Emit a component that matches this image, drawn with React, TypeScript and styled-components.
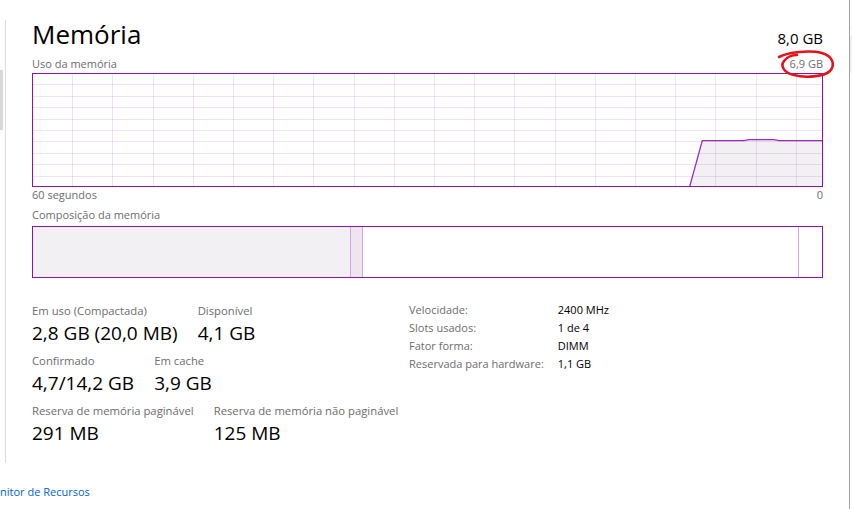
import React from "react";
import styled, { createGlobalStyle } from "styled-components";

const Global = createGlobalStyle`
  html, body { margin: 0; padding: 0; background: #ffffff; overflow: hidden; }
  body { font-family: "Open Sans", "Noto Sans", sans-serif; color: #000; }
`;

const PURPLE = "#8b12ae";

const Page = styled.div`
  position: relative;
  display: flex;
  width: 852px;
  height: 509px;
  overflow: hidden;
  background: #fff;
`;

const MainCol = styled.div`
  display: flex;
  flex-direction: column;
  width: 849px;
  flex: none;
`;

const Body = styled.div`
  display: flex;
  height: 478px;
`;

const LeftEdge = styled.div`
  display: flex;
  flex-direction: column;
  width: 6px;
  flex: none;
  margin-top: 20px;
  height: 443px;
  border-right: 1px solid #dedede;
  box-sizing: border-box;
  padding-top: 50px;
`;

const Thumb = styled.div`
  width: 3px;
  height: 60px;
  background: #d9d9d9;
`;

const Content = styled.div`
  display: flex;
  flex-direction: column;
  width: 791px;
  margin-left: 26px;
  padding-top: 17px;
`;

const HeaderRow = styled.div`
  display: flex;
  justify-content: space-between;
  align-items: baseline;
  height: 34px;
`;

const Title = styled.div`
  font-size: 26px;
  line-height: 34px;
  font-weight: 400;
`;

const Total = styled.div`
  font-size: 15px;
  line-height: 34px;
`;

const CaptionRow = styled.div<{ $mt?: number }>`
  position: relative;
  display: flex;
  justify-content: space-between;
  font-size: 11px;
  line-height: 14px;
  color: #6d6d6d;
  margin-top: ${(p) => p.$mt ?? 0}px;
`;

const Caption = styled.span``;

const ChartSvg = styled.svg`
  display: block;
  margin-top: 2px;
`;

const CompBar = styled.div`
  display: flex;
  height: 52px;
  margin-top: 4px;
  border: 1px solid ${PURPLE};
  box-sizing: border-box;
`;

const Segment = styled.div<{ $w?: number; $bg: string; $line?: boolean }>`
  ${(p) => (p.$w ? `width: ${p.$w}px; flex: none;` : "flex: 1;")}
  background: ${(p) => p.$bg};
  border-right: ${(p) => (p.$line ? "1px solid #cfa8dc" : "none")};
`;

const StatsArea = styled.div`
  display: flex;
  margin-top: 25px;
`;

const LeftStats = styled.div`
  display: flex;
  flex-direction: column;
  gap: 8px;
  width: 377px;
  flex: none;
`;

const StatRow = styled.div`
  display: flex;
  gap: 20px;
`;

const Stat = styled.div`
  display: flex;
  flex-direction: column;
`;

const StatLabel = styled.div`
  font-size: 11.3px;
  line-height: 16px;
  color: #6d6d6d;
  margin-bottom: 2px;
  white-space: nowrap;
`;

const StatValue = styled.div`
  font-size: 19px;
  line-height: 24px;
  color: #000;
  white-space: nowrap;
`;

const InfoGrid = styled.div`
  display: grid;
  grid-template-columns: auto auto;
  column-gap: 14px;
  align-content: start;
  margin-top: -2px;
  font-size: 11px;
  line-height: 18px;
`;

const InfoLabel = styled.div`
  color: #6d6d6d;
  white-space: nowrap;
`;

const InfoValue = styled.div`
  color: #000;
  white-space: nowrap;
`;

const Footer = styled.div`
  display: flex;
  overflow: hidden;
  height: 31px;
  align-items: flex-start;
  padding-top: 6px;
  box-sizing: border-box;
`;

const Link = styled.a`
  margin-left: -16.5px;
  font-size: 11px;
  line-height: 16px;
  color: #0063cc;
  text-decoration: none;
  white-space: nowrap;
  cursor: pointer;
`;

const RightEdge = styled.div`
  display: flex;
  flex-direction: column;
  width: 3px;
  flex: none;
  border-left: 1px solid #a3a3a3;
`;

const EdgeLine = styled.div`
  margin-top: 27px;
  height: 1px;
  background: #e6e6e6;
`;

const EdgeBlock = styled.div`
  margin-top: 7px;
  height: 38px;
  background: #f0f0f0;
`;

const Annotation = styled.svg`
  position: absolute;
  left: 776px;
  top: 48px;
  pointer-events: none;
`;

const CHART_W = 791;
const CHART_H = 114;

function UsageChart() {
  const vLines: number[] = [];
  for (let k = 1; k <= 19; k++) vLines.push(k * 40.2);
  const hLines: number[] = [];
  for (let k = 1; k <= 9; k++) hLines.push(k * 11.4);
  const line =
    "657.7,113.5 670.3,67.7 712,67.7 717,66.6 742,66.6 747,67.7 790.5,67.7";
  const area = `${line} 790.5,113.5`;
  return (
    <ChartSvg width={CHART_W} height={CHART_H} viewBox={`0 0 ${CHART_W} ${CHART_H}`}>
      <polygon points={area} fill="#f3f0f4" />
      {vLines.map((x) => (
        <line key={"v" + x} x1={Math.round(x) + 0.5} y1={0} x2={Math.round(x) + 0.5} y2={CHART_H} stroke="rgba(139,18,174,0.12)" strokeWidth={1} />
      ))}
      {hLines.map((y) => (
        <line key={"h" + y} x1={0} y1={Math.round(y) + 0.5} x2={CHART_W} y2={Math.round(y) + 0.5} stroke="rgba(139,18,174,0.12)" strokeWidth={1} />
      ))}
      <polyline points={line} fill="none" stroke="#9a2fbc" strokeWidth={1.3} />
      <rect x={0.5} y={0.5} width={CHART_W - 1} height={CHART_H - 1} fill="none" stroke={PURPLE} strokeWidth={1} />
    </ChartSvg>
  );
}

const leftStats = [
  [
    { label: "Em uso (Compactada)", value: "2,8 GB (20,0 MB)" },
    { label: "Disponível", value: "4,1 GB" },
  ],
  [
    { label: "Confirmado", value: "4,7/14,2 GB" },
    { label: "Em cache", value: "3,9 GB" },
  ],
  [
    { label: "Reserva de memória paginável", value: "291 MB" },
    { label: "Reserva de memória não paginável", value: "125 MB" },
  ],
];

const info = [
  ["Velocidade:", "2400 MHz"],
  ["Slots usados:", "1 de 4"],
  ["Fator forma:", "DIMM"],
  ["Reservada para hardware:", "1,1 GB"],
];

export default function App() {
  return (
    <>
      <Global />
      <Page>
        <MainCol>
          <Body>
            <LeftEdge>
              <Thumb />
            </LeftEdge>
            <Content>
              <HeaderRow>
                <Title>Memória</Title>
                <Total>8,0 GB</Total>
              </HeaderRow>
              <CaptionRow $mt={6}>
                <Caption>Uso da memória</Caption>
                <Caption>6,9 GB</Caption>
              </CaptionRow>
              <UsageChart />
              <CaptionRow $mt={1}>
                <Caption>60 segundos</Caption>
                <Caption>0</Caption>
              </CaptionRow>
              <CaptionRow $mt={6}>
                <Caption>Composição da memória</Caption>
              </CaptionRow>
              <CompBar>
                <Segment $w={317} $bg="#f3f0f4" $line />
                <Segment $w={11} $bg="#eee5f1" $line />
                <Segment $w={435} $bg="#ffffff" $line />
                <Segment $bg="#ffffff" />
              </CompBar>
              <StatsArea>
                <LeftStats>
                  {leftStats.map((row, i) => (
                    <StatRow key={i}>
                      {row.map((s) => (
                        <Stat key={s.label}>
                          <StatLabel>{s.label}</StatLabel>
                          <StatValue>{s.value}</StatValue>
                        </Stat>
                      ))}
                    </StatRow>
                  ))}
                </LeftStats>
                <InfoGrid>
                  {info.map(([l, v]) => (
                    <React.Fragment key={l}>
                      <InfoLabel>{l}</InfoLabel>
                      <InfoValue>{v}</InfoValue>
                    </React.Fragment>
                  ))}
                </InfoGrid>
              </StatsArea>
            </Content>
          </Body>
          <Footer>
            <Link>Monitor de Recursos</Link>
          </Footer>
        </MainCol>
        <RightEdge>
          <EdgeLine />
          <EdgeBlock />
        </RightEdge>
        <Annotation width={64} height={34} viewBox="0 0 64 34">
          <path
            d="M3,9 C12,4 34,2 46,5 C56,8 60,16 54,23 C48,29 28,30 18,27 C8,25 4,18 8,13 C11,9 16,7 21,7"
            fill="none"
            stroke="#e3131b"
            strokeWidth={2.6}
            strokeLinecap="round"
          />
        </Annotation>
      </Page>
    </>
  );
}
